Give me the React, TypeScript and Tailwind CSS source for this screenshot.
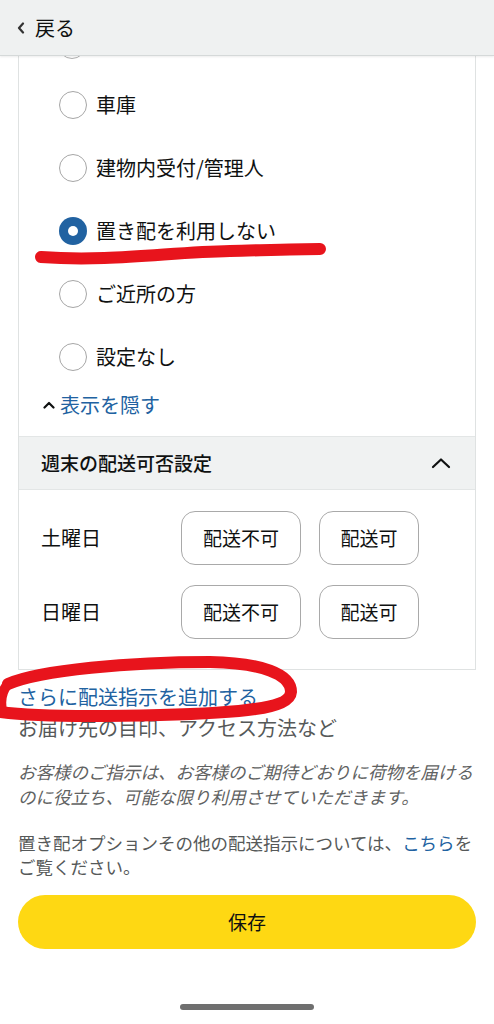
const font = { fontFamily: '"Noto Sans CJK JP", "Noto Sans", sans-serif' };

const options = [
  { label: "車庫", checked: false },
  { label: "建物内受付/管理人", checked: false },
  { label: "置き配を利用しない", checked: true },
  { label: "ご近所の方", checked: false },
  { label: "設定なし", checked: false },
];

function Radio({ checked }: { checked: boolean }) {
  if (checked) {
    return (
      <span className="flex h-7 w-7 shrink-0 items-center justify-center rounded-full bg-[#2162a1]">
        <span className="h-[10px] w-[10px] rounded-full bg-white" />
      </span>
    );
  }
  return <span className="h-7 w-7 shrink-0 rounded-full border border-[#a6a6a6] bg-white" />;
}

function DayRow({ day }: { day: string }) {
  return (
    <div className="flex items-center">
      <span className="w-[140px] text-[20px] text-[#0f1111]">{day}</span>
      <div className="flex gap-[18px]">
        <button className="h-[54px] w-[120px] rounded-[14px] border border-[#a9a9a9] bg-white text-[19px] text-[#0f1111]">
          配送不可
        </button>
        <button className="h-[54px] w-[100px] rounded-[14px] border border-[#a9a9a9] bg-white text-[19px] text-[#0f1111]">
          配送可
        </button>
      </div>
    </div>
  );
}

export default function App() {
  return (
    <div className="relative h-[1024px] w-[494px] overflow-hidden bg-white" style={font}>
      {/* ヘッダー */}
      <div className="relative z-10 flex h-[56px] items-center gap-[10px] border-b border-[#d5d9d9] bg-[#eff1f1] pl-[17px] shadow-[0_1px_2px_rgba(0,0,0,0.08)]">
        <svg width="8" height="12" viewBox="0 0 8 12" fill="none">
          <path d="M6 1.5 L2 6 L6 10.5" stroke="#333" strokeWidth="2.2" strokeLinecap="round" strokeLinejoin="round" />
        </svg>
        <span className="text-[20px] text-[#0f1111]">戻る</span>
      </div>

      {/* カード */}
      <div className="mx-[18px] border-x border-b border-[#dfe2e2]">
        <div className="h-[17px] overflow-hidden pl-[39px]">
          <span className="-mt-[25px] block h-7 w-7 rounded-full border border-[#b0b0b0]" />
        </div>
        {options.map((o) => (
          <div key={o.label} className="flex h-[63px] items-center gap-[9px] pl-[40px]">
            <Radio checked={o.checked} />
            <span className="text-[20px] text-[#0f1111]">{o.label}</span>
          </div>
        ))}
        <div className="mt-[3px] flex h-[28px] items-center gap-[5px] pl-[24px]">
          <svg width="12" height="8" viewBox="0 0 12 8" fill="none">
            <path d="M1.5 6.5 L6 2 L10.5 6.5" stroke="#0f1111" strokeWidth="2.2" strokeLinecap="round" strokeLinejoin="round" />
          </svg>
          <span className="text-[20px] text-[#2162a1]">表示を隠す</span>
        </div>
        <div className="h-[17px]" />

        <div className="flex h-[54px] items-center justify-between border-y border-[#e3e6e6] bg-[#f0f2f2] pl-[22px] pr-[24px]">
          <span className="text-[19px] font-medium text-[#0f1111]">週末の配送可否設定</span>
          <svg width="20" height="12" viewBox="0 0 20 12" fill="none">
            <path d="M2 10 L10 2.5 L18 10" stroke="#0f1111" strokeWidth="2.2" strokeLinecap="round" strokeLinejoin="round" />
          </svg>
        </div>
        <div className="flex flex-col gap-[20px] pb-[30px] pl-[22px] pt-[21px]">
          <DayRow day="土曜日" />
          <DayRow day="日曜日" />
        </div>
      </div>

      {/* 追加の指示 */}
      <div className="px-[18px] pt-[13px]">
        <div className="text-[20px] leading-[28px] text-[#2162a1]">さらに配送指示を追加する</div>
        <div className="mt-[3px] text-[20px] leading-[28px] text-[#565959]">お届け先の目印、アクセス方法など</div>
        <p className="mt-[17px] text-[17.5px] italic leading-[25px] text-[#5f6262]">
          お客様のご指示は、お客様のご期待どおりに荷物を届けるのに役立ち、可能な限り利用させていただきます。
        </p>
        <p className="mt-[22px] text-[17.5px] leading-[24px] text-[#565959]">
          置き配オプションその他の配送指示については、<a className="text-[#2162a1]">こちら</a>をご覧ください。
        </p>
        <button className="mt-[16px] flex h-[54px] w-full items-center justify-center rounded-full bg-[#fed813] text-[19px] text-[#0f1111]">
          保存
        </button>
        <div className="mt-[55px] flex justify-center">
          <span className="h-[6px] w-[134px] rounded-full bg-[#6f6f6f]" />
        </div>
      </div>

      {/* 赤い手書きの印 */}
      <svg className="pointer-events-none absolute inset-0 z-20" width="494" height="1024" viewBox="0 0 494 1024" fill="none">
        <path
          d="M41 257 C 110 262, 170 252, 230 251 C 270 250, 300 249, 320 249"
          stroke="#e8141c"
          strokeWidth="12"
          strokeLinecap="round"
        />
        <path
          d="M8 684 C 40 670, 130 662, 210 662 C 262 663, 291 674, 291 692 C 290 709, 240 713, 160 715 C 90 717, 30 716, 0 712"
          stroke="#e8141c"
          strokeWidth="12"
          strokeLinecap="round"
        />
        <path d="M8 684 C 2 691, 0 700, 2 710" stroke="#e8141c" strokeWidth="10" strokeLinecap="round" />
      </svg>
    </div>
  );
}
